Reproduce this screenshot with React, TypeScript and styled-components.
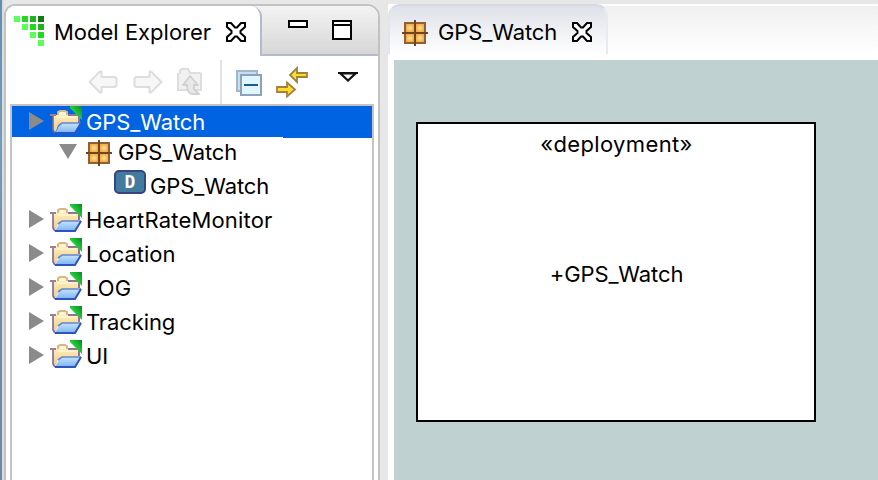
import React from "react";
import styled, { createGlobalStyle, css } from "styled-components";

const GlobalStyle = createGlobalStyle`
  * { box-sizing: border-box; }
  body { margin: 0; background: #e7e7e7; }
`;

const Window = styled.div`
  display: grid;
  grid-template-columns: 2px 2px 376px 8px 490px;
  width: 878px;
  height: 480px;
  overflow: hidden;
  background: #e7e7e7;
  color: #000;
  font-family: Inter, "Liberation Sans", sans-serif;
  font-size: 22px;
`;

const Desktop = styled.div`
  background: linear-gradient(#5f8fb5, #6f9dc2 30%, #7089a8 60%, #7088a8);
`;

const WindowEdge = styled.div`
  background: #dcdcdc;
`;

const Gutter = styled.div`
  background: #e7e7e7;
`;

const Explorer = styled.section`
  display: flex;
  flex-direction: column;
  margin-top: 4px;
  height: 476px;
  border: 2px solid #c2c2c0;
  border-bottom: 0;
  border-radius: 11px 13px 0 0;
  background: #fff;
  overflow: hidden;
`;

const ExplorerHeader = styled.header`
  display: flex;
  height: 50px;
  background: linear-gradient(#f3f3f3, #d6d6d6);
`;

const ExplorerTab = styled.div`
  display: flex;
  align-items: center;
  width: 256px;
  height: 50px;
  padding: 2px 0 0 8px;
  border-right: 2px solid #b3bacb;
  border-top-right-radius: 11px;
  background: #fff;
`;

const WindowControls = styled.div`
  display: flex;
  align-items: flex-start;
  flex: 1;
  gap: 24px;
  padding: 14px 0 0 26px;
  border-bottom: 2px solid #b3bacb;
`;

const Label = styled.span<{ $spacing?: number }>`
  line-height: 30px;
  white-space: nowrap;
  letter-spacing: ${(p) => p.$spacing ?? 0}px;
`;

const TabLabel = styled(Label)<{ $width: number }>`
  width: ${(p) => p.$width}px;
`;

const Toolbar = styled.div`
  display: flex;
  align-items: center;
  height: 48px;
  padding: 4px 0 0 82px;
`;

const Tool = styled.span<{ $gap: number; $raise?: number }>`
  display: flex;
  margin-left: ${(p) => p.$gap}px;
  margin-bottom: ${(p) => p.$raise ?? 0}px;
`;

const Separator = styled.span`
  width: 2px;
  height: 44px;
  margin-left: 17px;
  background: #e2e2e2;
`;

const Tree = styled.div`
  flex: 1;
  margin: 0 4px;
  border: 2px solid #c4c4c4;
  border-bottom: 0;
  background: #fff;
`;

const Row = styled.div<{ $level: number; $height?: number; $selected?: boolean; $raise?: number }>`
  display: flex;
  align-items: center;
  height: ${(p) => p.$height ?? 34}px;
  padding-left: ${(p) => 17 + p.$level * 32}px;
  padding-bottom: ${(p) => p.$raise ?? 0}px;
  ${(p) =>
    p.$selected &&
    css`
      color: #fff;
      background:
        linear-gradient(#0063e1, #0063e1) 0 0 / 100% 31px no-repeat,
        linear-gradient(#0063e1, #0063e1) 100% 0 / 89px 32px no-repeat;
    `}
`;

const Expander = styled.span<{ $shift?: number; $outdent?: number }>`
  display: flex;
  width: ${(p) => 21 + (p.$outdent ?? 0)}px;
  margin-top: ${(p) => p.$shift ?? 0}px;
  margin-left: ${(p) => -(p.$outdent ?? 0)}px;
`;

const Editor = styled.main`
  display: flex;
  flex-direction: column;
  margin-top: 4px;
  background: #fff;
`;

const EditorTabs = styled.header`
  display: flex;
  height: 50px;
  border-top: 2px solid #fff;
  background: linear-gradient(#f0f0f0, #fff);
  border-top-left-radius: 12px;
`;

const EditorTab = styled.div`
  display: flex;
  align-items: center;
  width: 220px;
  height: 50px;
  margin-top: -2px;
  padding: 4px 0 0 12px;
  border-top: 2px solid #d6d8e6;
  border-left: 2px solid #e3e5ee;
  border-right: 2px solid #e9eaf1;
  border-radius: 12px 12px 0 0;
  background: linear-gradient(#dfe1e9, #fff);
`;

const Canvas = styled.div`
  flex: 1;
  margin: 6px 0 0 6px;
  padding: 62px 0 0 22px;
  background: #c0d1d1;
`;

const Deployment = styled.article`
  display: flex;
  flex-direction: column;
  align-items: center;
  width: 400px;
  height: 300px;
  padding: 5px 0 0 1px;
  border: 2px solid #000;
  background: #fff;
`;

const NodeName = styled(Label)`
  margin-top: 100px;
`;

const LogoIcon = () => (
  <svg width="30" height="30" shapeRendering="crispEdges">
    {[
      [0, 0, "#5bff5b"], [8, 0, "#22d922"], [16, 0, "#20b520"], [24, 0, "#117b11"],
      [8, 8, "#5bff5b"], [16, 8, "#22d922"], [24, 8, "#20b520"],
      [16, 16, "#5bff5b"], [24, 16, "#22d922"], [24, 24, "#5bff5b"],
    ].map(([x, y, c]) => (
      <rect key={`${x}-${y}`} x={x} y={y} width="6" height="6" fill={String(c)} />
    ))}
  </svg>
);

const CloseIcon = () => (
  <svg width="20" height="20" viewBox="0 0 20 20">
    <path d="M1 1H5L9 5.5H11L15 1H19V5L14.5 9V11L19 15V19H15L11 14.5H9L5 19H1V15L5.5 11V9L1 5Z" fill="#fff" stroke="#000" strokeWidth="2" />
  </svg>
);

const MinimizeIcon = () => (
  <svg width="20" height="8"><rect x="1" y="1" width="18" height="6" fill="#fff" stroke="#000" strokeWidth="2" /></svg>
);

const MaximizeIcon = () => (
  <svg width="20" height="20"><path d="M1 1H19V19H1ZM1 5H19" fill="#fff" stroke="#000" strokeWidth="2" /></svg>
);

const ArrowIcon = ({ forward }: { forward?: boolean }) => (
  <svg width="30" height="24" viewBox="0 0 30 24">
    <path transform={forward ? "translate(30 0) scale(-1 1)" : undefined} d="M1.5 12L12 1.5H13.5V7H27L28.5 8.5V15.5L27 17H13.5V22.5H12Z" fill="#f7f7f7" stroke="#dddddd" strokeWidth="2" strokeLinejoin="round" />
  </svg>
);

const UpFolderIcon = () => (
  <svg width="26" height="28" viewBox="0 0 26 28">
    <path d="M1 22V6L3 5V2L5 1H11L13 5H23L24 6V22Z" fill="#f1f1f1" stroke="#dedede" strokeWidth="2" />
    <path d="M13 8L21 17H17V21L22 26H16C11 26 10 22 10 17H6Z" fill="#e9e9e9" stroke="#d0d0d0" strokeWidth="1.8" strokeLinejoin="round" />
  </svg>
);

const CollapseIcon = () => (
  <svg width="26" height="26" viewBox="0 0 26 26">
    <rect x="1" y="1" width="20" height="20" fill="#c3e0ee" stroke="#a3b6cc" strokeWidth="2" />
    <rect x="5" y="5" width="20" height="20" fill="#e0f6fd" stroke="#909fba" strokeWidth="2" />
    <path d="M8 15H22" stroke="#1c5a92" strokeWidth="2" />
  </svg>
);

const LinkIcon = () => (
  <svg width="32" height="32" viewBox="0 0 32 32" strokeWidth="1.8">
    <path d="M31 7H21V2L14 9L21 16V11H31Z" fill="#fbdd32" stroke="#9c8438" />
    <path d="M1 21H11V16.5L19 23.5L11 30.5V26H1Z" fill="#fbdd32" stroke="#a67f3c" />
  </svg>
);

const MenuIcon = () => (
  <svg width="20" height="12"><path d="M2.5 2.5H17.5L10 9.5Z" fill="#fff" stroke="#161616" strokeWidth="2.2" /><path d="M0 2H20" stroke="#111" strokeWidth="2" /></svg>
);

const Closed = () => (
  <svg width="15" height="18"><path d="M0 0L15 9L0 18Z" fill="#8b8b8b" /></svg>
);

const Opened = () => (
  <svg width="18" height="15"><path d="M0 0H18L9 15Z" fill="#8b8b8b" /></svg>
);

const FolderIcon = () => (
  <svg width="32" height="28" viewBox="0 0 32 28">
    <defs>
      <linearGradient id="paper" x2="0" y2="1"><stop stopColor="#fff0bd" /><stop offset="1" stopColor="#f2c987" /></linearGradient>
      <linearGradient id="cover" x2="0" y2="1"><stop stopColor="#c6e4fb" /><stop offset="1" stopColor="#79b4f1" /></linearGradient>
      <linearGradient id="corner" x1="0.2" y1="0.8" x2="1" y2="0"><stop stopColor="#35f04c" /><stop offset="1" stopColor="#068a1f" /></linearGradient>
    </defs>
    <path d="M3 9H7L9 7H16L18 9H28V18H12L8 20L5 27L3 24Z" fill="url(#paper)" />
    <path d="M8 9V6L10 5H15L17 6V9" fill="#fff6dc" stroke="#dcb682" strokeWidth="2" />
    <path d="M7 11H26" stroke="#fff3cc" strokeWidth="2" />
    <path d="M18 9H29V16" fill="none" stroke="#92788c" strokeWidth="2" />
    <path d="M0 9H6" stroke="#a28183" strokeWidth="2" />
    <path d="M3 10V24L5 27" fill="none" stroke="#75699f" strokeWidth="1.6" />
    <path d="M12 17H31L25 27H5L9 20Z" fill="url(#cover)" />
    <path d="M8 20L12 17H31" fill="none" stroke="#6687cc" strokeWidth="1.6" />
    <path d="M31 17L25 27H5" fill="none" stroke="#3153bd" strokeWidth="2" />
    <path d="M20 0H32V14L20 2Z" fill="url(#corner)" />
  </svg>
);

const GridIcon = () => (
  <svg width="26" height="26" viewBox="0 0 26 26">
    <defs><radialGradient id="cell"><stop stopColor="#ffe496" /><stop offset="1" stopColor="#f3ad48" /></radialGradient></defs>
    <rect x="3" y="3" width="20" height="20" fill="#d9964a" stroke="#8f6038" strokeWidth="2" />
    {[4, 14].map((x) => [4, 14].map((y) => <rect key={`${x}-${y}`} x={x} y={y} width="8" height="8" fill="url(#cell)" />))}
    <path d="M0 13H26M13 0V26" stroke="#70451f" strokeWidth="2" />
  </svg>
);

const Badge = styled.span`
  display: flex;
  align-items: center;
  justify-content: center;
  width: 32px;
  height: 24px;
  margin: -8px 4px 0 0;
  border: 2px solid #37447e;
  border-radius: 5px;
  background: #417b9f;
  color: #fff;
  font: bold 18px/20px "DejaVu Sans Mono", monospace;
`;

const Glyph = styled.span<{ $width: number; $shift?: number; $indent?: number }>`
  display: flex;
  width: ${(p) => p.$width}px;
  margin-top: ${(p) => p.$shift ?? 0}px;
  padding-left: ${(p) => p.$indent ?? 0}px;
`;

const closedProjects = [
  { name: "HeartRateMonitor", spacing: 0.18 },
  { name: "Location", spacing: 0 },
  { name: "LOG", spacing: 0 },
  { name: "Tracking", spacing: -0.1 },
  { name: "UI", spacing: 0 },
];

export default function App() {
  return (
    <>
      <GlobalStyle />
      <Window>
        <Desktop />
        <WindowEdge />
        <Explorer>
          <ExplorerHeader>
            <ExplorerTab>
              <Glyph $width={40} $shift={-2}><LogoIcon /></Glyph>
              <TabLabel $width={172}>Model Explorer</TabLabel>
              <CloseIcon />
            </ExplorerTab>
            <WindowControls><MinimizeIcon /><MaximizeIcon /></WindowControls>
          </ExplorerHeader>
          <Toolbar>
            <Tool $gap={0}><ArrowIcon /></Tool>
            <Tool $gap={15}><ArrowIcon forward /></Tool>
            <Tool $gap={14}><UpFolderIcon /></Tool>
            <Separator />
            <Tool $gap={14} $raise={-2}><CollapseIcon /></Tool>
            <Tool $gap={14}><LinkIcon /></Tool>
            <Tool $gap={30} $raise={10}><MenuIcon /></Tool>
          </Toolbar>
          <Tree>
            <Row $level={0} $height={32} $selected>
              <Expander $shift={-2}><Closed /></Expander>
              <Glyph $width={36} $shift={-4}><FolderIcon /></Glyph>
              <Label $spacing={-0.1}>GPS_Watch</Label>
            </Row>
            <Row $level={1} $height={31} $raise={3}>
              <Expander $shift={-1} $outdent={2}><Opened /></Expander>
              <Glyph $width={36} $indent={4} $shift={1}><GridIcon /></Glyph>
              <Label $spacing={-0.1}>GPS_Watch</Label>
            </Row>
            <Row $level={2}>
              <Expander />
              <Badge>D</Badge>
              <Label $spacing={-0.1}>GPS_Watch</Label>
            </Row>
            {closedProjects.map(({ name, spacing }) => (
              <Row key={name} $level={0}>
                <Expander $shift={-2}><Closed /></Expander>
                <Glyph $width={36} $shift={-4}><FolderIcon /></Glyph>
                <Label $spacing={spacing}>{name}</Label>
              </Row>
            ))}
          </Tree>
        </Explorer>
        <Gutter />
        <Editor>
          <EditorTabs>
            <EditorTab>
              <Glyph $width={36} $shift={2}><GridIcon /></Glyph>
              <TabLabel $width={134} $spacing={-0.1}>GPS_Watch</TabLabel>
              <CloseIcon />
            </EditorTab>
          </EditorTabs>
          <Canvas>
            <Deployment>
              <Label $spacing={0.36}>«deployment»</Label>
              <NodeName $spacing={-0.1}>+GPS_Watch</NodeName>
            </Deployment>
          </Canvas>
        </Editor>
      </Window>
    </>
  );
}
